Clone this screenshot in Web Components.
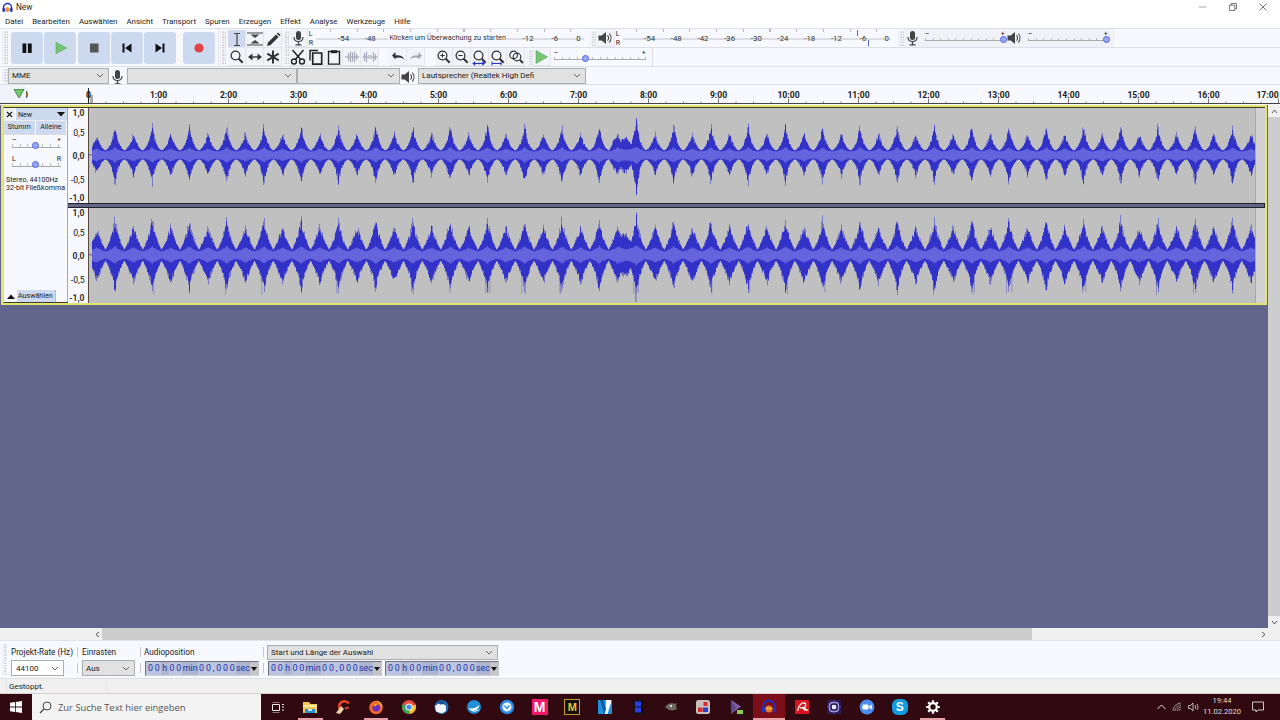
<!DOCTYPE html>
<html lang="de">
<head>
<meta charset="utf-8">
<title>New</title>
<style>
  html, body { margin: 0; padding: 0; height: 100%; overflow: hidden; }
  body { font: 8px Roboto, "Liberation Sans", sans-serif; color: #222; background: #f8f9fe; }
  #app { display: flex; flex-direction: column; width: 1280px; height: 720px; }
</style>
</head>
<body>
<div id="app">
  <title-bar>New</title-bar>
  <menu-bar items="Datei,Bearbeiten,Auswählen,Ansicht,Transport,Spuren,Erzeugen,Effekt,Analyse,Werkzeuge,Hilfe"></menu-bar>
  <tool-area></tool-area>
  <device-bar></device-bar>
  <time-ruler></time-ruler>
  <work-space></work-space>
  <h-scroll></h-scroll>
  <selection-bar></selection-bar>
  <status-bar>Gestoppt.</status-bar>
  <task-bar></task-bar>
</div>

<script>
const svg = (w, h, body) => `<svg xmlns="http://www.w3.org/2000/svg" width="${w}" height="${h}" viewBox="0 0 ${w} ${h}" style="display:block">${body}</svg>`;

const magnifier = (extra = '') => `<circle cx="7.5" cy="7.5" r="4.4" fill="none" stroke="#333" stroke-width="1.3"/><path d="M10.7 10.8l4 4" stroke="#333" stroke-width="2"/>${extra}`;

const ICONS = {
  pause: '<path d="M0 0h3.8v9.5H0zM5.4 0h3.8v9.5H5.4z" fill="#111" transform="translate(11.5 11.5)"/>',
  play: '<path d="M12 10.3l10.500 5.700L12 21.700z" fill="#74c474" stroke="#5aa65a" stroke-width=".6"/>',
  stop: '<path d="M12 11.5h8.5v9H12z" fill="#555"/>',
  start: '<path d="M11.5 11.5h2v9h-2zM20.5 11.5v9l-6.5-4.5z" fill="#111"/>',
  end: '<path d="M18.5 11.5h2v9h-2zM11.5 11.5v9l6.5-4.5z" fill="#111"/>',
  rec: '<circle cx="16" cy="16" r="4.6" fill="#e34444"/>',
  ibeam: '<path d="M6 3.5h6M6 15.5h6M9 3.5v12" stroke="#444" stroke-width="1.2" fill="none"/>',
  envelope: '<path d="M1 3h16M1 15h16" stroke="#444" stroke-width="1"/><path d="M4.500 4.500l4.500 3.500 4.500-3.500zM4.500 13.500l4.500-3.500 4.500 3.500z" fill="#444"/>',
  pencil: '<path d="M4 12.5l8-8 2.6 2.6-8 8L3 16z" fill="#333"/><path d="M12.8 3.6l1.2-1.1 2.6 2.6-1.2 1.2z" fill="#333"/>',
  zoom: magnifier(),
  shift: '<path d="M6 9h6" stroke="#333" stroke-width="1.4"/><path d="M2 9l4.5-3.6v7.2zM16 9l-4.5-3.6v7.2z" fill="#333"/>',
  multi: '<path d="M9 2.5v13M3.3 5.6l11.4 6.8M14.7 5.6L3.3 12.4" stroke="#333" stroke-width="2"/>',
  cut: '<circle cx="5" cy="13.5" r="2.5" fill="none" stroke="#222" stroke-width="1.4"/><circle cx="13" cy="13.5" r="2.5" fill="none" stroke="#222" stroke-width="1.4"/><path d="M6.3 11.5L14.5 2M11.7 11.5L3.5 2" stroke="#222" stroke-width="1.5"/>',
  copy: '<path d="M3 12.5V2.5h8" fill="none" stroke="#222" stroke-width="1.4"/><path d="M5.7 5h9v11.2h-9z" fill="none" stroke="#222" stroke-width="1.7"/>',
  paste: '<path d="M6 3.5H3.5v12.6h11V3.5H12" fill="none" stroke="#222" stroke-width="1.4"/><path d="M6 2.2h6v3H6z" fill="#222"/>',
  trim: '<path d="M2 9h14" stroke="#999" stroke-width="1"/><path d="M5.5 5v8M7.5 3.5v11M9.5 4.5v9M11.5 3.5v11M13.5 6v6" stroke="#aab" stroke-width="1.2"/>',
  silence: '<path d="M1.5 9h15" stroke="#999" stroke-width="1"/><path d="M3.5 5v8M5.5 3.5v11M12.5 4v10M14.5 6v6" stroke="#aab" stroke-width="1.2"/><path d="M7 7h4v4H7z" fill="#c8c8d0"/>',
  undo: '<path d="M3 7.5l3.5-3.5v7.4z" fill="#333"/><path d="M5.5 7.6c4.5-1 8.5 0 10 4.4-2.4-2.5-5.5-3-9.5-1.9z" fill="#333"/>',
  redo: '<g transform="matrix(-1 0 0 1 18 0)"><path d="M3 7.5l3.5-3.5v7.4z" fill="#aaa"/><path d="M5.5 7.6c4.5-1 8.5 0 10 4.4-2.4-2.5-5.5-3-9.5-1.9z" fill="#aaa"/></g>',
  zoomin: magnifier('<path d="M5.3 7.5h4.4M7.500 5.300v4.400" stroke="#333" stroke-width="1"/>'),
  zoomout: magnifier('<path d="M5.3 7.5h4.4" stroke="#333" stroke-width="1"/>'),
  zoomsel: magnifier('<path d="M3 15.5h10" stroke="#2233cc" stroke-width="1"/><path d="M1.5 15.5l2.6-2v4zM14 15.5l-2.6-2v4zM8 13.5v4" fill="#2233cc" stroke="#2233cc" stroke-width=".4"/>'),
  zoomfit: magnifier('<path d="M3 15.5h9M3 13.5v4M12 13.5v4" stroke="#2233cc" stroke-width="1"/>'),
  zoomtog: '<circle cx="6.6" cy="7" r="3.8" fill="none" stroke="#333" stroke-width="1.2"/><circle cx="10" cy="9" r="3.8" fill="none" stroke="#333" stroke-width="1.2"/><path d="M13 12l3 3" stroke="#333" stroke-width="2"/>',
  playgreen: '<path d="M3 2.5L14.5 9 3 15.5z" fill="#74c474" stroke="#5aa65a" stroke-width=".6"/>',
  mic: '<rect x="6" y="2" width="5" height="9" rx="2.5" fill="#444"/><path d="M4 8c0 6 9 6 9 0" fill="none" stroke="#444" stroke-width="1.2"/><path d="M8.500 13v2.5M5.500 15.8h6" stroke="#444" stroke-width="1.3"/>',
  speaker: '<path d="M1.500 6.5h3.2L9 3v12l-4.300-3.500H1.500z" fill="#444"/><path d="M10.500 6.300c1.200 1.500 1.200 3.900 0 5.400M12.300 4.500c2.200 2.600 2.200 6.400 0 9" fill="none" stroke="#444" stroke-width="1.1"/>'
};

const chevron = c => svg(8, 5, `<path d="M1 1l3 3 3-3" fill="none" stroke="${c}" stroke-width="1"/>`);

/* every element gets its shadow root from the same spot */
class Box extends HTMLElement {
  connectedCallback() {
    if (this.shadowRoot) return;
    this.attachShadow({ mode: 'open' }).innerHTML = `<style>${this.css()}</style>${this.html()}`;
    this.ready();
  }
  css() { return ':host{display:block}'; }
  html() { return '<slot></slot>'; }
  ready() {}
}

class TitleBar extends Box {
  css() { return `
    :host{display:flex;align-items:center;height:14px;flex:none;background:#fff;font-size:8.2px}
    .logo{margin:0 3px 0 2px}
    .ctl{margin-left:auto;display:flex;padding-right:2.5px}
    .ctl div{width:30px;display:flex;justify-content:center}
  `; }
  html() { return `
    <div class="logo">${svg(11, 11, '<path d="M1.5 8V5.5a4 4 0 018 0V8" fill="none" stroke="#1f2fb8" stroke-width="1.5"/><rect x=".5" y="6" width="2.4" height="4" rx="1" fill="#1f2fb8"/><rect x="8.1" y="6" width="2.4" height="4" rx="1" fill="#1f2fb8"/><circle cx="5.5" cy="7.5" r="2.3" fill="#e8742a"/><path d="M3.4 7.2h4.2" stroke="#f6d040" stroke-width=".9"/>')}</div>
    <slot></slot>
    <div class="ctl">
      <div>${svg(8, 8, '<path d="M0 4h7.5" stroke="#aaa" stroke-width="1"/>')}</div>
      <div>${svg(8, 8, '<path d="M.5 2.2h5.3v5.3H.5zM2.2 2V.5h5.3v5.3H6" fill="none" stroke="#555" stroke-width=".8"/>')}</div>
      <div style="width:29.5px">${svg(8, 8, '<path d="M.5.5l7 7M7.5.5l-7 7" stroke="#555" stroke-width=".8"/>')}</div>
    </div>
  `; }
}

class MenuBar extends Box {
  css() { return `
    :host{display:flex;height:14px;flex:none;align-items:center;background:#fff;padding:1px 0 0 5px;gap:9px;font-size:7.9px;box-sizing:border-box}
  `; }
  html() { return this.getAttribute('items').split(',').map(m => `<span>${m}</span>`).join(''); }
}

class ToolGrip extends Box {
  css() { return `
    :host{display:block;flex:none;width:6px;align-self:stretch;margin:1px 0;box-sizing:border-box;
      background:radial-gradient(circle at 1px 1px,#c4c6cc .7px,transparent .8px) 1px 1px/2.6px 2.6px;border-left:1px solid #eceef4}
  `; }
  html() { return ''; }
}

class ToolBtn extends Box {
  css() { return `
    :host{display:block;flex:none;width:18px;height:18px;box-sizing:border-box;background:#f3f4f9;border-right:1px solid #e3e5ec;border-bottom:1px solid #e3e5ec}
    :host([on]){background:#cdd9ee}
    :host([flat]){background:transparent;border-color:transparent}
  `; }
  html() { return svg(18, 18, ICONS[this.getAttribute('icon')]); }
}

class TransportBtn extends Box {
  css() { return `:host{display:block;flex:none;width:32px;height:32px;border-radius:3px;background:#cdd9ee}`; }
  html() { return svg(32, 32, ICONS[this.getAttribute('icon')]); }
}

class LevelMeter extends Box {
  css() { return `
    :host{display:flex;flex:none;position:relative;width:268px;height:18px;box-sizing:border-box;align-items:center;font-size:7.8px;color:#333;padding:1px 0 0 ${this.getAttribute('pad')}px;
      background:
        repeating-linear-gradient(90deg,#b8b8bc 0 1px,transparent 1px 26.7px) ${this.getAttribute('tick')}px 0/100% 3px no-repeat,
        linear-gradient(#dcdde2,#dcdde2) 0 9px/100% 2px no-repeat}
    span{flex:none;width:26.7px;text-align:center}
    b{flex:none;font-weight:400;font-size:7.3px;width:119px;margin:0 7.6px 0 4.6px;background:#f8f9fe;text-align:center;line-height:12px;white-space:nowrap}
    i{position:absolute;width:1px;height:6px;background:#5566dd}
  `; }
  html() {
    const marks = (this.getAttribute('marks') || '').split(' ').filter(Boolean).map(m => {
      const [x, y] = m.split(',');
      return `<i style="left:${x}px;top:${y}px"></i>`;
    }).join('');
    return this.getAttribute('labels').split(' ').map(l => l === '|' ? `<b>${this.getAttribute('msg')}</b>` : `<span ${l === '0' ? 'style="margin-left:-3px"' : ''}>${l}</span>`).join('') + marks;
  }
}

class LrTag extends Box {
  css() { return `:host{display:flex;flex:none;flex-direction:column;justify-content:space-between;width:8px;height:18px;box-sizing:border-box;padding:1px 0 0 1px;font-size:7px;line-height:8px}`; }
  html() { return '<span>L</span><span>R</span>'; }
}

class MiniSlider extends Box {
  css() { return `
    :host{display:block;flex:none;position:relative;height:14px;box-sizing:border-box;color:#222;font-size:7px;line-height:6px}
    .s{display:flex;justify-content:space-between;height:7px}
    .t{height:2.500px;border-bottom:1px solid #aaa;background:repeating-linear-gradient(90deg,#bbb 0 1px,transparent 1px 7.6px)}
    .k{position:absolute;top:5px;width:5px;height:5px;border-radius:50%;border:1.1px solid #4a62e8;background:#9aa8f0;left:${this.getAttribute('pos')}}
  `; }
  html() { return `<div class="s"><span>${this.getAttribute('a') || '–'}</span><span>${this.getAttribute('b') || '+'}</span></div><div class="t"></div><div class="k"></div>`; }
}

class ToolArea extends Box {
  css() { return `
    :host{display:flex;flex:none;height:38px;box-sizing:border-box;border-top:1px solid #dedfe6;background:#f8f9fe}
    .tr{display:flex;gap:1.34px;align-items:center;margin-left:3px;padding-right:3px;border-right:1px solid #e3e4ea}
    .rec{margin-left:5px}
    .tools{display:grid;grid-template-columns:repeat(3,18px);grid-auto-rows:18px;margin:1px 1px 0 2px}
    .col{display:flex;flex-direction:column;flex:1}
    .row{display:flex;height:18.5px;flex:none;align-items:center;border-bottom:1px solid #dedfe6;box-sizing:border-box}
    .row+.row{border:0;height:18.5px}
    .group{display:flex;flex:none}
    .mix{display:flex;align-items:center;align-self:stretch;background:#f1f2f7;width:211px;flex:none}
    .row tool-btn{height:17.5px}
  `; }
  html() { return `
    <tool-grip style="margin-left:2px"></tool-grip>
    <div class="tr">
      <transport-btn icon="pause"></transport-btn><transport-btn icon="play"></transport-btn>
      <transport-btn icon="stop"></transport-btn><transport-btn icon="start"></transport-btn>
      <transport-btn icon="end"></transport-btn><transport-btn class="rec" icon="rec"></transport-btn>
    </div>
    <tool-grip style="margin-left:1px"></tool-grip>
    <div class="tools">
      <tool-btn icon="ibeam" on></tool-btn><tool-btn icon="envelope"></tool-btn><tool-btn icon="pencil"></tool-btn>
      <tool-btn icon="zoom"></tool-btn><tool-btn icon="shift"></tool-btn><tool-btn icon="multi"></tool-btn>
    </div>
    <tool-grip></tool-grip>
    <div class="col">
      <div class="row">
        <tool-btn icon="mic" style="margin-left:1px"></tool-btn><lr-tag></lr-tag>
        <level-meter pad="14.6" tick="14" labels="-54 -48 | -12 -6 0" msg="Klicken um Überwachung zu starten"></level-meter>
        <tool-grip style="margin-left:6px"></tool-grip>
        <tool-btn icon="speaker" style="margin-left:1px"></tool-btn><lr-tag></lr-tag>
        <level-meter pad="13.6" tick="13" labels="-54 -48 -42 -36 -30 -24 -18 -12 -6 0" marks="234,1 245,11" msg=""></level-meter>
        <tool-grip style="margin-left:7px"></tool-grip>
        <div class="mix">
          <tool-btn icon="mic" flat></tool-btn>
          <mini-slider pos="calc(100% - 5px)" style="width:80px;margin-left:3px"></mini-slider>
          <tool-btn icon="speaker" flat style="margin-left:1px"></tool-btn>
          <mini-slider pos="calc(100% - 5px)" style="width:80px;margin-left:4px"></mini-slider>
        </div>
      </div>
      <div class="row">
        <div class="group">
          <tool-btn icon="cut"></tool-btn><tool-btn icon="copy"></tool-btn><tool-btn icon="paste"></tool-btn>
          <tool-btn icon="trim"></tool-btn><tool-btn icon="silence"></tool-btn>
        </div>
        <div class="group" style="margin-left:10px"><tool-btn icon="undo"></tool-btn><tool-btn icon="redo"></tool-btn></div>
        <div class="group" style="margin-left:10px">
          <tool-btn icon="zoomin"></tool-btn><tool-btn icon="zoomout"></tool-btn><tool-btn icon="zoomsel"></tool-btn>
          <tool-btn icon="zoomfit"></tool-btn><tool-btn icon="zoomtog"></tool-btn>
        </div>
        <tool-grip style="margin-left:2px"></tool-grip>
        <tool-btn icon="playgreen" style="border-color:#e3e5ec"></tool-btn>
        <mini-slider pos="31%" style="width:92px;margin-left:3px"></mini-slider>
        <div style="width:1px;height:100%;background:#dedfe6;margin-left:6px"></div>
      </div>
    </div>
  `; }
}

class ComboBox extends Box {
  css() { return `
    :host{display:flex;flex:none;align-items:center;justify-content:space-between;box-sizing:border-box;height:16px;padding:0 4px 0 3px;
      background:#e1e1e1;border:1px solid #adadad;font-size:8px;white-space:nowrap;overflow:hidden}
    :host([white]){background:#fff}
  `; }
  html() { return `<span><slot></slot></span>${chevron('#666')}`; }
}

class DeviceBar extends Box {
  css() { return `
    :host{display:flex;flex:none;height:19px;align-items:center;box-sizing:border-box;border-top:1px solid #dedfe6;border-bottom:1px solid #dedfe6;background:#f8f9fe}
    .ic{flex:none;width:18px;height:16px;overflow:hidden}
  `; }
  html() { return `
    <tool-grip style="margin-left:2px;width:6px"></tool-grip>
    <combo-box style="width:101px">MME</combo-box>
    <div class="ic">${svg(18, 18, ICONS.mic)}</div>
    <combo-box style="width:170px">&nbsp;</combo-box>
    <combo-box style="width:103px">&nbsp;</combo-box>
    <div class="ic">${svg(18, 18, ICONS.speaker)}</div>
    <combo-box style="width:168px">Lautsprecher (Realtek High Defi</combo-box>
  `; }
}

class TimeRuler extends Box {
  css() { return `
    :host{display:block;flex:none;position:relative;height:20px;background:#f8f9fe;overflow:hidden;font-weight:700;font-size:8.6px;color:#222}
    .ticks{position:absolute;left:0;top:0}
    .labels{display:flex;height:18px;padding-top:1px;box-sizing:border-box;align-items:center;position:relative}
    .box{flex:none;width:26px;height:18px;margin-top:-1px;background:#f1f3fa;margin-right:27.5px;display:flex;padding-left:12.500px;box-sizing:border-box;position:relative}
    .clip{position:absolute;left:26px;top:4.500px;width:2px;overflow:hidden;direction:rtl;font-weight:700}
    .labels span{flex:none;width:70px;text-align:center}
  `; }
  html() {
    let t = '';
    for (let i = 0; i <= 73; i++) {
      const x = 89 + i * 17.5 - 0.5, major = i % 4 === 0;
      t += `<path d="M${x} ${major ? 13.5 : 16.5}V18.5" stroke="${major ? '#777' : '#888'}" stroke-width="1"/>`;
    }
    t += '<path d="M0 18.500H1280" stroke="#444" stroke-width="1.2"/><path d="M88.500 3V19" stroke="#222" stroke-width="1"/><rect x="90" y="10" width="3" height="8" fill="#aaa"/>';
    let labels = '<span>0</span>';
    for (let m = 1; m <= 17; m++) labels += `<span ${m === 17 ? 'style="margin-left:-11px"' : ''}>${m}:00</span>`;
    return `<div class="ticks">${svg(1280, 20, t)}</div>
      <div class="labels"><div class="box">${svg(12, 13, '<path d="M1 4.500h10L6 13z" fill="#74c474" stroke="#3d8a3d" stroke-width=".9"/>')}</div><div class="clip">0</div>${labels}</div>`;
  }
}

class TrackPanel extends Box {
  css() { return `
    :host{display:flex;flex-direction:column;flex:none;width:64px;background:#f8f9fe;box-sizing:border-box;font-size:7.1px;color:#222;border-right:1px solid #aaa}
    .h{display:flex;height:12px;background:#cdd9ee;align-items:center;border-bottom:1px solid #eee}
    .x{width:12px;height:12px;background:#eef0f6;display:flex;align-items:center;justify-content:center;flex:none;box-sizing:border-box;border-right:1px solid #fff}
    .n{flex:1;padding-left:2px}
    .a{margin-right:2px}
    .b{display:flex;height:13px;border-bottom:1px solid #ddd}
    .b span{flex:1;background:#cdd9ee;text-align:center;line-height:12px;border-right:1px solid #fff}
    mini-slider{margin:3px 6px 0 8px}
    .i{margin:6px 0 0 2px;line-height:8px;white-space:nowrap}
    .f{margin-top:auto;display:flex;height:12px;align-items:center}
    .f .u{width:13px;display:flex;justify-content:center}
    .f .l{width:39px;box-sizing:border-box;height:12px;line-height:11px;background:#cdd9ee;padding-left:1px;border-right:1px solid #bbb}
  `; }
  html() { return `
    <div class="h">
      <div class="x">${svg(7, 7, '<path d="M1 1l5 5M6 1L1 6" stroke="#222" stroke-width="1.3"/>')}</div>
      <span class="n">New</span>
      <span class="a">${svg(8, 5, '<path d="M0 0h8L4 4.500z" fill="#111"/>')}</span>
    </div>
    <div class="b"><span>Stumm</span><span>Alleine</span></div>
    <mini-slider pos="calc(50% - 5px)" style="margin-top:2px"></mini-slider>
    <mini-slider pos="calc(50% - 5px)" a="L" b="R" style="margin-top:5px"></mini-slider>
    <div class="i">Stereo, 44100Hz<br>32-bit Fließkomma</div>
    <div class="f"><div class="u">${svg(8, 5, '<path d="M0 5h8L4 .5z" fill="#111"/>')}</div><div class="l">Auswählen</div></div>
  `; }
}

class DbRuler extends Box {
  css() { return `
    :host{display:flex;flex:none;flex-direction:column;width:21px;height:100%;background:#f8f9fe;border-right:1px solid #5a4a40;box-sizing:border-box;position:relative;
      font-size:8.6px;font-weight:700;color:#333;text-align:right;padding-right:3.500px}
    span{height:0;line-height:0;display:block}
    .m{font-weight:400;color:#111}
  `; }
  html() {
    return `<span style="margin-top:5px">1,0</span><span class="m" style="margin-top:20px">0,5</span><span style="margin-top:23px">0,0</span><span class="m" style="margin-top:24px">-0,5</span><span style="margin-top:18px">-1,0</span>`;
  }
}

/* peaks are noise around a beat every 37.25px, loudest cluster near 8:00 */
class WaveView extends Box {
  css() { return `
    :host{display:block;flex:1;height:100%;position:relative;background:#c0c0c0}
    canvas{display:block;width:1176px;height:95px}
    .end{position:absolute;left:1166px;right:0;top:0;bottom:0;background:#d2d2d2;border-left:1.5px solid #a8a8a8}
  `; }
  html() { return '<canvas width="2352" height="190"></canvas><div class="end"></div>'; }
  ready() {
    const ch = +this.getAttribute('channel');
    const g = this.shadowRoot.querySelector('canvas').getContext('2d');
    let seed = ch ? 91731 : 2741;
    const rnd = () => (seed = (seed * 16807) % 2147483647) / 2147483647;
    const P = 37.25, X0 = 114.7, HALF = P / 4;
    const cfg = ch
      ? { base: 5, bigM: 20, bigS: 13, smlM: 20, smlS: 5, pw: 1.05, tau: 2.6, cy: 47, hot: 1, peak: 5 }
      : { base: 4.4, bigM: 12, bigS: 15, smlM: 11, smlS: 8, pw: 1.5, tau: 2.6, cy: 47, hot: .8, peak: 13 };
    g.fillStyle = '#3232c8';
    g.fillRect(0, cfg.cy * 2 - 1, 8, 1.5);
    for (let c = 6; c < 1166 * 2; c++) {
      const x = 89 + c / 2;
      /* beats alternate loud and soft every half period */
      const n = Math.round((x - X0) / (P / 2));
      const at = X0 + n * (P / 2);
      const isBig = (n % 2 + 2) % 2 === 0;
      const d = Math.abs(x - at);
      const t = Math.max(0, 1 - d / HALF);
      let a = (isBig ? cfg.bigM : cfg.smlM) * Math.pow(t, cfg.pw) + (isBig ? cfg.bigS : cfg.smlS) * Math.exp(-d / cfg.tau);
      let r = 3.6 + a * .16;
      /* the swell just before 8:00 fades in and out */
      const w = Math.max(0, 1 - Math.abs(x - 621) / 12);
      a = Math.max(a, Math.pow(w, .7) * (20 * cfg.hot + 5 * Math.sin((x - 610) / 2.2)));
      if (x > 600) a += cfg.peak * Math.exp(-Math.abs(x - 636) / 2.2);
      r += 1.8 * Math.exp(-Math.pow((x - 628) / 13, 2));
      if (x < 97) a *= .8;
      const top = cfg.base + a * (.72 + rnd() * .36);
      const bot = cfg.base + a * (.7 + rnd() * .36) + (ch ? .5 : -.3);
      const rt = r * (.9 + rnd() * .2), rb = r * (.9 + rnd() * .2);
      /* bottom spikes in channel 2 are faint and reach further */
      if (ch && isBig && d < 3 && rnd() < .1) {
        g.fillStyle = '#7f7fc0';
        g.fillRect(c, cfg.cy * 2, 1.5, (37 + rnd() * 3) * 2);
      }
      g.fillStyle = '#3232c8';
      g.fillRect(c, (cfg.cy - top) * 2, 1, (top + bot) * 2);
      g.fillStyle = '#6464dc';
      g.fillRect(c, (cfg.cy - rt) * 2, 1, (rt + rb) * 2);
    }
    if (ch) {
      g.fillStyle = '#7f7fc0';
      g.fillRect((635 - 89) * 2, 94 * 2 - 30, 3, 30);
    }
  }
}

class AudioTrack extends Box {
  css() { return `
    :host{display:flex;flex:none;width:1266px;height:200px;box-sizing:border-box;border:2px solid #e4e46e;outline:0;background:#62668a;margin-left:1px}
    .in{display:flex;flex:1;border:1px solid #333;border-left-color:#e4e46e;border-right-color:#222;border-top:1px solid #3a3a30;border-bottom:1px solid #3a3a30;min-width:0}
    .chs{flex:1;display:flex;flex-direction:column;min-width:0}
    .ch{display:flex;height:95px;flex:none}
    .gap{height:3px;flex:none;background:#62668a;border-top:1px solid #222;border-bottom:1px solid #222}
  `; }
  html() { return `
    <div class="in">
      <track-panel></track-panel>
      <div class="chs">
        <div class="ch"><db-ruler></db-ruler><wave-view channel="0"></wave-view></div>
        <div class="gap"></div>
        <div class="ch"><db-ruler></db-ruler><wave-view channel="1"></wave-view></div>
      </div>
    </div>
  `; }
}

class VScroll extends Box {
  css() { return `
    :host{display:flex;flex-direction:column;flex:none;width:12px;background:#f0f0f0;margin-left:1px}
    .a{height:12px;flex:none;display:flex;align-items:center;justify-content:center}
    .t{flex:1;background:#cdcdcd}
  `; }
  html() { return `
    <div class="a">${svg(7, 5, '<path d="M1 4l2.500-3L6 4" fill="none" stroke="#555" stroke-width="1"/>')}</div>
    <div class="t"></div>
    <div class="a">${svg(7, 5, '<path d="M1 1l2.500 3L6 1" fill="none" stroke="#555" stroke-width="1"/>')}</div>
  `; }
}

class WorkSpace extends Box {
  css() { return `:host{display:flex;flex:1;min-height:0;background:#62668a;justify-content:space-between;align-items:flex-start}vertical-scroll{align-self:stretch}`; }
  html() { return '<audio-track></audio-track><vertical-scroll></vertical-scroll>'; }
}

class HScroll extends Box {
  css() { return `
    :host{display:flex;flex:none;height:12px;align-items:center;background:#f0f0f0;padding-left:92px}
    .a{flex:none;width:10px;display:flex;justify-content:center}
    .t{flex:none;width:930px;height:100%;background:#cdcdcd}
    .r{margin-left:auto;width:34px}
  `; }
  html() { return `
    <div class="a">${svg(5, 7, '<path d="M4 1L1 3.500 4 6" fill="none" stroke="#555" stroke-width="1"/>')}</div>
    <div class="t"></div>
    <div class="a r">${svg(5, 7, '<path d="M1 1l3 2.500L1 6" fill="none" stroke="#555" stroke-width="1"/>')}</div>
  `; }
}

class TimeField extends Box {
  css() { return `
    :host{display:flex;flex:none;width:114px;height:15px;box-sizing:border-box;align-items:center;background:#bcc2d6;border:1px solid #70727c;border-right-color:#c4c6cc;border-bottom-color:#d0d2d8;padding-left:1px;font-size:8.8px;color:#2233aa}
    span{flex:none;text-align:center}
    .d{width:6.8px;background:#bcc5df;line-height:13px}
    .u{background:#adb5cf;line-height:13px}
    .v{margin-left:auto;width:8px;height:13px;background:#c4c4c8;display:flex;align-items:center;justify-content:center}
  `; }
  html() {
    const d = '<span class="d">0</span>';
    const u = (t, w) => `<span class="u" style="width:${w}px">${t}</span>`;
    return d + d + u('h', 8) + d + d + u('min', 16) + d + d + '<span class="d" style="width:3.500px">,</span>' + d + d + d + u('sec', 14.5) +
      `<div class="v">${svg(6, 4, '<path d="M0 0h6L3 4z" fill="#111"/>')}</div>`;
  }
}

class SelectionBar extends Box {
  css() { return `
    :host{display:flex;flex:none;height:38px;box-sizing:border-box;padding-top:4px;background:#f8f9fe;border-top:1px solid #e3e4ea;font-size:8.2px;color:#222}
    .c{display:flex;flex-direction:column;flex:none;height:31px;justify-content:space-between}
    .l{height:14px;line-height:14px;white-space:nowrap}
    .s{flex:none;width:1px;background:#c8c8cc;height:10px;margin-top:2px}
    .r{display:flex;gap:3px;margin-left:1px}
    .p{margin-left:1px}
  `; }
  html() {
    const sep = w => `<div class="c" style="width:${w}px"><div class="s"></div><div class="s" style="margin-top:0;margin-bottom:3px"></div></div>`;
    return `
    <tool-grip style="margin:-2px 0 3px 2px;width:5px"></tool-grip>
    <div class="c" style="margin-left:4px;width:66px">
      <div class="l">Projekt-Rate (Hz)</div>
      <combo-box white style="width:53px;padding-left:4px">44100</combo-box>
    </div>
    ${sep(5)}
    <div class="c" style="width:58px">
      <div class="l">Einrasten</div>
      <combo-box style="width:53px">Aus</combo-box>
    </div>
    ${sep(4)}
    <div class="c" style="width:119px">
      <div class="l">Audioposition</div>
      <time-field class="p"></time-field>
    </div>
    ${sep(4)}
    <div class="c">
      <combo-box style="width:231px;height:15px">Start und Länge der Auswahl</combo-box>
      <div class="r"><time-field></time-field><time-field></time-field></div>
    </div>
  `; }
}

class StatusBar extends Box {
  css() { return `
    :host{display:flex;flex:none;height:15px;box-sizing:border-box;align-items:center;background:#f0f0f0;border-top:1px solid #e0e0e0;font-size:8px;color:#222}
    div{height:100%;width:101px;box-sizing:border-box;margin-left:6px;padding:3px 0 0 2px;border:solid #e4e4e4;border-width:0 1px}
  `; }
  html() { return '<div><slot></slot></div>'; }
}

const TILE = {
  folder: '<path d="M1 3h6l1.500 2H15v9H1z" fill="#f4c64a"/><path d="M1 6h14v2H1z" fill="#fbe9a4"/><path d="M3 10h10v4H3z" fill="#2d8fd8"/><path d="M6 10h4v2H6z" fill="#bfe3f8"/>',
  cc: '<path d="M14 4.500A6 6 0 006 3.500C3.500 5 3.500 10 7 12" fill="none" stroke="#e8452c" stroke-width="2.600"/><path d="M10 9a3 3 0 003.500-1" fill="none" stroke="#e8452c" stroke-width="2"/><path d="M6 7l3 3-4 5-4-1z" fill="#e9d3a8"/>',
  ff: '<circle cx="8" cy="8.500" r="6.800" fill="#f06a2a"/><path d="M8 1.500c4 1 6.500 3.500 6.500 7l-3-4z" fill="#ffc02e"/><circle cx="8.200" cy="8.800" r="3.800" fill="#6a2bc4"/><path d="M5 6c2-2 4-1 5 0-2 0-3 1-3 2z" fill="#ff9a3a"/>',
  chrome: '<circle cx="8" cy="8" r="7" fill="#e64a3b"/><path d="M8 8L14.500 5.500A7 7 0 018.500 15z" fill="#f6c52f"/><path d="M8 8l.5 7A7 7 0 011.700 5z" fill="#3aa757"/><circle cx="8" cy="8" r="3.500" fill="#fff"/><circle cx="8" cy="8" r="2.600" fill="#4a8af4"/>',
  tb: '<circle cx="8.500" cy="8" r="7" fill="#1c6fb8"/><path d="M2 7l6-4 5 4v5l-4 2.500-6-2z" fill="#f2f5f9"/><path d="M4 3l6-1 2 3-5 .5z" fill="#1c4f96"/>',
  oo: '<circle cx="8" cy="8" r="7" fill="#1f8fd8"/><path d="M2.500 9c3 1 7 .5 11-3-1 4-4 6-7 5.500 3 .5 5-.5 7-1-3 3-8 3-11-1.500z" fill="#fff"/>',
  tl: '<circle cx="8" cy="8" r="7.200" fill="#2b8de8"/><circle cx="8" cy="8" r="4.500" fill="#f2f6fb"/><path d="M5.500 6.500L8 9.500l2.500-3" fill="none" stroke="#2b8de8" stroke-width="1.300"/>',
  vs: '<path d="M1 1h14v14H1z" fill="#1d8fe0"/><path d="M9 1h5v3l-3.500 11H8z" fill="#f2f8fc"/><path d="M3 1h3l3 9-1.500 5z" fill="#0a5ca8"/>',
  film: '<path d="M3 1h10v14H3z" fill="#111"/><path d="M5 2.500h6v5H5zM5 8.500h6v5H5z" fill="#2a3de8"/>',
  gimp: '<path d="M2 8l3-3 4-1 3 1 2-1-1 3 1 3-4 1.500-4-.5z" fill="#6a6a60"/><path d="M7 6h2v2H7z" fill="#ddd"/>',
  yd: '<rect x="1" y="1" width="14" height="14" rx="2.500" fill="#c8c0c0"/><path d="M8.500 3h4v4h-4z" fill="#d82a2a"/><path d="M8 8.500h5V13H8z" fill="#2a3dc8"/><path d="M3 8.500h4.500V13H3z" fill="#d82a2a"/>',
  pv: '<path d="M3 1l10 6.500L3 15z" fill="#7c5fa8"/><path d="M3 1l5 8-5 6z" fill="#5a4688"/><path d="M9 11h6v4H9z" fill="#8ad04a"/>',
  aud: '<path d="M2.500 10V7a5.500 5.500 0 0111 0v3" fill="none" stroke="#2030c8" stroke-width="1.900"/><rect x="1" y="8" width="3" height="5.500" rx="1.200" fill="#2030c8"/><rect x="12" y="8" width="3" height="5.500" rx="1.200" fill="#2030c8"/><circle cx="8" cy="10" r="3.600" fill="#e8742a"/><path d="M5 9.500h6" stroke="#f6d040" stroke-width="1.300"/>',
  avira: '<rect x="1" y="1" width="14" height="14" fill="#d8141e"/><path d="M3.500 12C5 6 8 3.500 10.500 4c2 .5 1.500 3.500-.5 4.500 1 1 1.500 2 3 2.500-2 .5-3.500-.5-4.500-2.500-1 .5-2 .5-2.500 0" fill="none" stroke="#fff" stroke-width="1.300"/>',
  qt: '<rect x="1" y="1" width="14" height="14" fill="#2a1a5c"/><rect x="3.500" y="3.500" width="9" height="9" rx="3" fill="none" stroke="#a89ad8" stroke-width="1.300"/><path d="M8 1v14M1 8h14" stroke="#6a5aa8" stroke-width=".8"/><rect x="6" y="6" width="4" height="4" fill="#e8e4f8"/>',
  zoom: '<circle cx="8" cy="8" r="7.400" fill="#4a8cf0"/><rect x="3.500" y="5.500" width="6" height="5" rx="1.200" fill="#fff"/><path d="M10.300 7.300l2.500-1.800v5l-2.500-1.800z" fill="#fff"/>',
  gear: '<circle cx="8" cy="8" r="3.800" fill="none" stroke="#fff" stroke-width="2.200"/><path d="M8 1.200v2.600M8 12.200v2.600M1.200 8h2.600M12.200 8h2.600M3.200 3.200l1.800 1.800M11 11l1.800 1.800M3.200 12.800L5 11M11 5l1.800-1.800" stroke="#fff" stroke-width="2.200"/>'
};

class TaskIcon extends Box {
  css() { return `
    :host{display:flex;flex:none;width:32.75px;height:100%;align-items:center;justify-content:center;box-sizing:border-box;position:relative}
    :host([active]){background:#7c0f1a}
    :host([run])::after{content:"";position:absolute;left:4px;right:4px;bottom:0;height:2px;background:#e8a0a8}
    :host([active])::after{left:0;right:0}
    .m{width:16px;height:16px;display:flex;align-items:center;justify-content:center;font:700 14px/16px "Liberation Sans",sans-serif;color:#fff}
  `; }
  html() {
    const t = this.getAttribute('tile');
    if (t === 'mag') return '<div class="m" style="background:#f0186a">M</div>';
    if (t === 'mi') return '<div class="m" style="background:#111;border:1.500px solid #c89a2a;box-sizing:border-box;color:#f2c230;font-size:11px">M</div>';
    if (t === 'skype') return '<div class="m" style="background:#0f9be0;border-radius:6px;font-size:12px">S</div>';
    return svg(16, 16, TILE[t]);
  }
}

class TaskBar extends Box {
  css() { return `
    :host{display:flex;flex:none;height:27px;background:#300a10;color:#eee;border-top:1px solid #d8d0d0;box-sizing:border-box;align-items:stretch}
    .st{flex:none;width:32px;display:flex;align-items:center;justify-content:center}
    .se{flex:none;width:229px;background:#f3f3f3;color:#555;display:flex;align-items:center;font:9.4px "Open Sans","Noto Sans",sans-serif;padding-left:7px;box-sizing:border-box;gap:6px}
    .tv{flex:none;width:33px;display:flex;align-items:center;justify-content:center}
    .tr{margin-left:auto;display:flex;align-items:center;font-size:7.6px;color:#ddd;padding-right:9.5px}
    .tr div{flex:none;display:flex;justify-content:center}
    .clk{width:41px;flex-direction:column;text-align:center;line-height:11px;margin-left:.5px;padding-bottom:2px}
  `; }
  html() { return `
    <div class="st">${svg(12, 12, '<path d="M0 1.700L5 1v4.600H0zM5.800.9L12 0v5.600H5.800zM0 6.400h5V11l-5-.7zM5.800 6.400H12V12l-6.200-.9z" fill="#fff"/>')}</div>
    <div class="se">${svg(13, 13, '<circle cx="8" cy="5" r="4" fill="none" stroke="#444" stroke-width="1"/><path d="M5 8l-4 4" stroke="#444" stroke-width="1.200"/>')}<span>Zur Suche Text hier eingeben</span></div>
    <div class="tv">${svg(12, 11, '<path d="M.5 2.500h7v6h-7zM.5 0h7M.5 11h7M10 2.500h2M10 5h2M10 8h2" fill="none" stroke="#e8e8e8" stroke-width="1"/>')}</div>
    <task-icon tile="folder" run></task-icon><task-icon tile="cc"></task-icon><task-icon tile="ff" run></task-icon>
    <task-icon tile="chrome"></task-icon><task-icon tile="tb"></task-icon><task-icon tile="oo"></task-icon>
    <task-icon tile="tl"></task-icon><task-icon tile="mag"></task-icon><task-icon tile="mi"></task-icon>
    <task-icon tile="vs"></task-icon><task-icon tile="film"></task-icon><task-icon tile="gimp"></task-icon>
    <task-icon tile="yd"></task-icon><task-icon tile="pv"></task-icon><task-icon tile="aud" active run></task-icon>
    <task-icon tile="avira"></task-icon><task-icon tile="qt"></task-icon><task-icon tile="zoom"></task-icon>
    <task-icon tile="skype"></task-icon><task-icon tile="gear" run></task-icon>
    <div class="tr">
      <div style="width:16px">${svg(9, 6, '<path d="M.5 5L4.500 1l4 4" fill="none" stroke="#ddd" stroke-width="1"/>')}</div>
      <div style="width:16px">${svg(11, 10, '<path d="M1 9a8 8 0 018-8M3 9a6 6 0 016-6M5 9a4 4 0 014-4M7 9a2 2 0 012-2" fill="none" stroke="#aaa" stroke-width=".8"/>')}</div>
      <div style="width:16px">${svg(11, 10, '<path d="M.5 3.500h2L5 1v8L2.500 6.500h-2z" fill="none" stroke="#ddd" stroke-width=".8"/><path d="M7 3c.8 1.200.8 2.800 0 4M9 2c1.300 2 1.300 4 0 6" fill="none" stroke="#ddd" stroke-width=".8"/>')}</div>
      <div class="clk"><span>19:44</span><span>11.02.2020</span></div>
      <div style="width:25px;margin-left:3px">${svg(12, 12, '<path d="M.5 1h11v8H6L4 11V9H.5z" fill="none" stroke="#ddd" stroke-width=".9"/>')}</div>
    </div>
  `; }
}

const tags = {
  'title-bar': TitleBar, 'menu-bar': MenuBar, 'tool-grip': ToolGrip, 'tool-btn': ToolBtn, 'transport-btn': TransportBtn,
  'level-meter': LevelMeter, 'lr-tag': LrTag, 'mini-slider': MiniSlider, 'tool-area': ToolArea, 'combo-box': ComboBox,
  'device-bar': DeviceBar, 'time-ruler': TimeRuler, 'track-panel': TrackPanel, 'db-ruler': DbRuler, 'wave-view': WaveView,
  'audio-track': AudioTrack, 'vertical-scroll': VScroll, 'work-space': WorkSpace, 'h-scroll': HScroll, 'time-field': TimeField,
  'selection-bar': SelectionBar, 'status-bar': StatusBar, 'task-icon': TaskIcon, 'task-bar': TaskBar
};
Object.keys(tags).forEach(t => customElements.define(t, tags[t]));
</script>
</body>
</html>
